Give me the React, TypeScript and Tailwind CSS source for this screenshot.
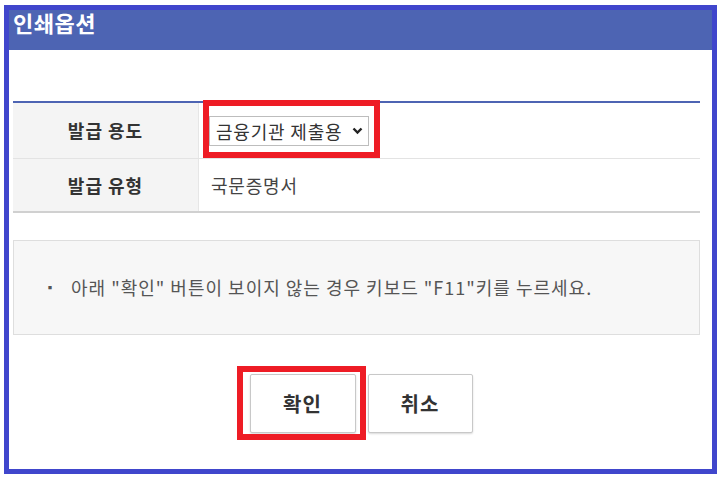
import React from "react";

const font = { fontFamily: '"Noto Sans CJK KR", "Noto Sans", sans-serif' };

export default function App() {
  return (
    <div className="w-[720px] h-[479px] bg-white pl-[4px] pt-[5px]" style={font}>
      <div className="w-[713px] h-[469px] border-[5px] border-[#4046cc] flex flex-col bg-white">
        <div className="h-[40px] bg-[#4d64b3] pl-[4px]">
          <div className="text-[22px] leading-[24px] font-bold text-white tracking-[0.5px]">인쇄옵션</div>
        </div>
        <div className="h-[51px]" />
        <div className="ml-[4px] w-[687px] border-t-2 border-[#4d64b3]">
          <div className="flex h-[56px] border-b border-[#e3e3e3]">
            <div className="w-[186px] bg-[#f4f4f4] border-r border-[#e6e6e6] flex items-center justify-center text-[18px] tracking-[1px] font-bold text-[#333]">
              발급 용도
            </div>
            <div className="relative flex-1 flex items-center pl-[10px]">
              <div className="w-[160px] h-[30px] border border-[#bdbdbd] flex items-center pl-[6px] pr-[5px] text-[18px] tracking-[0.8px] text-[#333] bg-white">
                <span className="flex-1 leading-none whitespace-nowrap">금융기관 제출용</span>
                <svg width="11" height="8" viewBox="0 0 11 8">
                  <path d="M1.5 1.5 L5.5 5.5 L9.5 1.5" stroke="#222" strokeWidth="2.4" fill="none" />
                </svg>
              </div>
              <div className="absolute left-[4px] -top-[3px] w-[177px] h-[58px] border-[6px] border-[#ee1c25]" />
            </div>
          </div>
          <div className="flex h-[54px] border-b-2 border-[#d0d0d0]">
            <div className="w-[186px] bg-[#f4f4f4] border-r border-[#e6e6e6] flex items-center justify-center text-[18px] tracking-[1px] font-bold text-[#333]">
              발급 유형
            </div>
            <div className="flex-1 flex items-center pl-[12px] text-[18px] tracking-[0.8px] text-[#444]">국문증명서</div>
          </div>
        </div>
        <div className="ml-[4px] w-[687px] mt-[27px] h-[95px] bg-[#f7f7f7] border border-[#dedede] flex items-center pl-[30px] text-[18px] tracking-[1px] text-[#555]">
          <span className="w-[27px] text-[12px]">▪</span>
          <span className="whitespace-nowrap">아래 "확인" 버튼이 보이지 않는 경우 키보드 "F11"키를 누르세요.</span>
        </div>
        <div className="mt-[39px] flex justify-center gap-[12px] pl-[1px]">
          <div className="relative">
            <button className="w-[106px] h-[59px] border border-[#c8c8c8] rounded-[2px] bg-white text-[20px] tracking-[1px] font-bold text-[#333] shadow-[0_1px_2px_rgba(0,0,0,0.15)]">
              확인
            </button>
            <div className="absolute -left-[13px] -top-[8px] w-[129px] h-[74px] border-[6px] border-[#ee1c25]" />
          </div>
          <button className="w-[105px] h-[59px] border border-[#c8c8c8] rounded-[2px] bg-white text-[20px] tracking-[1px] font-bold text-[#333] shadow-[0_1px_2px_rgba(0,0,0,0.15)]">
            취소
          </button>
        </div>
      </div>
    </div>
  );
}
